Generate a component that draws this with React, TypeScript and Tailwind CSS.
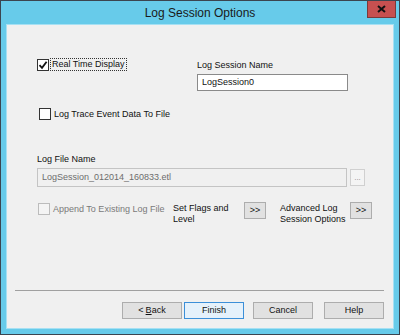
const font = { fontFamily: '"Liberation Sans", Arial, sans-serif' };

function CheckBox({ checked, disabled }: { checked?: boolean; disabled?: boolean }) {
  return (
    <span
      className={
        "flex h-[12px] w-[12px] shrink-0 items-center justify-center border " +
        (disabled ? "border-[#bcbcbc] bg-[#f4f4f4]" : "border-[#333333] bg-white")
      }
    >
      {checked && (
        <svg width="10" height="10" viewBox="0 0 10 10">
          <path d="M1.5 5.2 L4 7.8 L8.6 1.8" fill="none" stroke="#111" strokeWidth="1.8" />
        </svg>
      )}
    </span>
  );
}

function Btn({ children, def, className }: { children: React.ReactNode; def?: boolean; className?: string }) {
  return (
    <button
      className={
        "flex h-[17px] items-center justify-center border text-[9px] leading-none text-[#111] " +
        (def ? "border-[#3c8fd8] bg-[#e5f1fb] " : "border-[#adadad] bg-[#e1e1e1] ") +
        (className ?? "")
      }
    >
      {children}
    </button>
  );
}

export default function App() {
  return (
    <div style={font} className="flex h-[335px] w-[400px] flex-col border border-[#3b4550] bg-[#67cbea]">
      {/* title bar */}
      <div className="flex h-[23px] shrink-0 items-start">
        <div className="w-[32px]" />
        <div className="flex-1 pt-[5px] text-center text-[12px] leading-[14px] text-[#1a1a1a]">Log Session Options</div>
        <div className="mr-[3px] flex h-[17px] w-[29px] items-center justify-center border border-[#7a3a3a] border-t-0 bg-[#c75050]">
          <svg width="9" height="8" viewBox="0 0 9 8">
            <path d="M1 1 L8 7 M8 1 L1 7" stroke="#111" strokeWidth="2" />
          </svg>
        </div>
      </div>

      {/* client area */}
      <div className="mx-[5px] flex flex-1 flex-col border border-[#a6e0f3] bg-[#f0f0f0] text-[9px] leading-[11px] text-[#111]">
        <div className="mt-[33px] flex pl-[30px]">
          <div className="w-[160px]">
            <div className="flex h-[13px] items-center">
              <CheckBox checked />
              <span className="ml-[1px] border border-dotted border-[#333] px-[1px] leading-[11px]">Real Time Display</span>
            </div>
          </div>
          <div className="flex flex-col">
            <div className="h-[12px] leading-[12px] pt-[1px]">Log Session Name</div>
            <div className="mt-[4px] flex h-[17px] w-[151px] items-center border border-[#8a8a8a] bg-white pl-[4px]">
              LogSession0
            </div>
          </div>
        </div>

        <div className="mt-[17px] flex items-center gap-[3px] pl-[32px]">
          <CheckBox />
          <span>Log Trace Event Data To File</span>
        </div>

        <div className="mt-[33px] pl-[30px] h-[12px] leading-[12px]">Log File Name</div>
        <div className="mt-[3px] flex items-center gap-[3px] pl-[30px]">
          <div className="flex h-[19px] w-[310px] items-center border border-[#c4c4c4] bg-[#f0f0f0] pl-[4px] text-[#6d6d6d]">
            LogSession_012014_160833.etl
          </div>
          <div className="flex h-[17px] w-[15px] items-center justify-center border border-[#d0d0d0] bg-[#f4f4f4] text-[8px] text-[#8a8a8a]">
            ...
          </div>
        </div>

        <div className="mt-[15px] flex items-start pl-[31px]">
          <div className="flex w-[135px] items-center gap-[3px] pt-[1px]">
            <CheckBox disabled />
            <span className="text-[#7a7a7a]">Append To Existing Log File</span>
          </div>
          <div className="w-[71px] pt-[1px]">
            Set Flags and
            <br />
            Level
          </div>
          <Btn className="w-[22px]">&gt;&gt;</Btn>
          <div className="ml-[14px] w-[70px] pt-[1px]">
            Advanced Log
            <br />
            Session Options
          </div>
          <Btn className="w-[22px]">&gt;&gt;</Btn>
        </div>

        <div className="mt-auto ml-[8px] mr-[9px] h-px bg-[#a0a0a0]" />
        <div className="mb-[9px] mt-[11px] flex justify-end pr-[9px]">
          <Btn className="w-[60px]">
            &lt; <span className="ml-[2px] underline">B</span>ack
          </Btn>
          <Btn def className="ml-[2px] w-[60px]">Finish</Btn>
          <Btn className="ml-[9px] w-[60px]">Cancel</Btn>
          <Btn className="ml-[11px] w-[60px]">Help</Btn>
        </div>
      </div>
      <div className="h-[5px] shrink-0" />
    </div>
  );
}
